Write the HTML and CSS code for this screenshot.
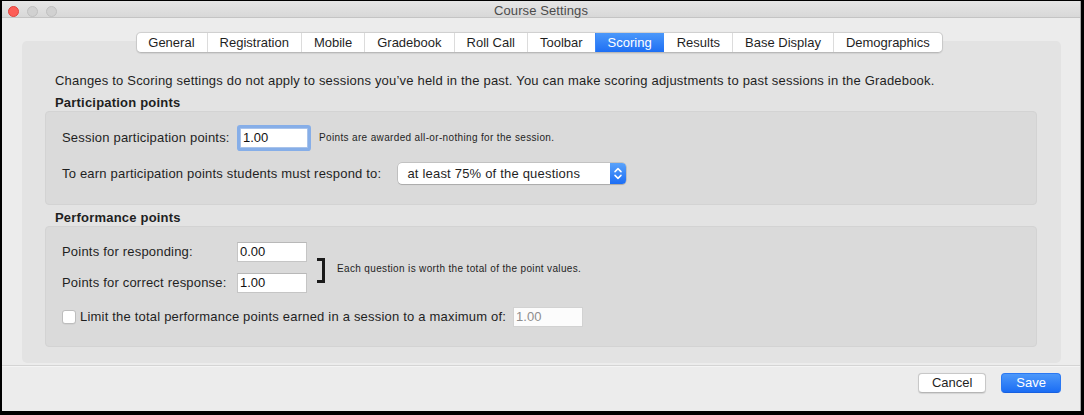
FILE: index.html
```html
<!DOCTYPE html>
<html lang="en">
<head>
<meta charset="utf-8">
<title>Course Settings</title>
<link rel="stylesheet" href="styles.css">
</head>
<body>
<div class="window">
  <div class="titlebar">
    <div class="lights">
      <span class="light red"></span>
      <span class="light"></span>
      <span class="light"></span>
    </div>
    <div class="title">Course Settings</div>
    <div></div>
  </div>

  <div class="content">
    <div class="tabs">
      <div class="seg">
        <span class="tab">General</span>
        <span class="tab">Registration</span>
        <span class="tab">Mobile</span>
        <span class="tab">Gradebook</span>
        <span class="tab">Roll Call</span>
        <span class="tab">Toolbar</span>
        <span class="tab active">Scoring</span>
        <span class="tab after-active">Results</span>
        <span class="tab">Base Display</span>
        <span class="tab">Demographics</span>
      </div>
    </div>

    <div class="panel">
      <p class="intro">Changes to Scoring settings do not apply to sessions you’ve held in the past. You can make scoring adjustments to past sessions in the Gradebook.</p>

      <h3 class="heading">Participation points</h3>
      <div class="group group-part">
        <div class="row row-session">
          <span class="lbl lbl-session">Session participation points:</span>
          <span class="field focused">1.00</span>
          <span class="small note-session">Points are awarded all-or-nothing for the session.</span>
        </div>
        <div class="row row-respond">
          <span class="lbl">To earn participation points students must respond to:</span>
          <div class="popup">
            <span class="popup-text">at least 75% of the questions</span>
            <span class="popup-arrow">
              <svg width="16" height="21" viewBox="0 0 16 21"><path d="M5 8.6 L8 5.6 L11 8.6" fill="none" stroke="#fff" stroke-width="1.5" stroke-linecap="round" stroke-linejoin="round"/><path d="M5 12.4 L8 15.4 L11 12.4" fill="none" stroke="#fff" stroke-width="1.5" stroke-linecap="round" stroke-linejoin="round"/></svg>
            </span>
          </div>
        </div>
      </div>

      <h3 class="heading heading-perf">Performance points</h3>
      <div class="group group-perf">
        <div class="pair">
          <div class="fields">
            <div class="row">
              <span class="lbl lbl-col">Points for responding:</span>
              <span class="field">0.00</span>
            </div>
            <div class="row">
              <span class="lbl lbl-col">Points for correct response:</span>
              <span class="field">1.00</span>
            </div>
          </div>
          <span class="bracket"></span>
          <span class="small note-pair">Each question is worth the total of the point values.</span>
        </div>
        <div class="row row-limit">
          <span class="checkbox"></span>
          <span class="lbl lbl-limit">Limit the total performance points earned in a session to a maximum of:</span>
          <span class="field disabled">1.00</span>
        </div>
      </div>
    </div>
  </div>

  <div class="footer">
    <button class="btn btn-cancel">Cancel</button>
    <button class="btn btn-save">Save</button>
  </div>
</div>
</body>
</html>
```

FILE: styles.css
```css
* { box-sizing: border-box; }

html, body {
  margin: 0;
  padding: 0;
  background: #000;
}

body {
  font-family: "Liberation Sans", Arial, sans-serif;
  font-size: 13px;
  color: #1f1f1f;
  padding: 1px 3px 0 2px;
}

.window {
  height: 410px;
  background: #ececec;
  display: flex;
  flex-direction: column;
  overflow: hidden;
  border-right: 1px solid #a8a8a8;
}

/* Title bar */
.titlebar {
  height: 17px;
  padding-top: 4px;
  background: linear-gradient(#e6e6e6, #d8d8d8);
  border-bottom: 1px solid #c4c4c4;
  display: grid;
  grid-template-columns: 1fr auto 1fr;
  align-items: center;
}

.lights {
  display: flex;
  gap: 8px;
  padding-left: 6px;
}

.light {
  width: 11px;
  height: 11px;
  border-radius: 50%;
  background: #d1d1d1;
  border: 1px solid #c0c0c0;
}

.light.red {
  background: #fd5e57;
  border-color: #e0443e;
}

.title {
  font-size: 13px;
  color: #4b4b4b;
  line-height: 12px;
  letter-spacing: 0.1px;
}

/* Content */
.content {
  flex: 1;
  padding: 14px 19px 0 20px;
}

.tabs {
  display: flex;
  justify-content: center;
  position: relative;
  z-index: 1;
  margin-bottom: -12px;
  padding-right: 4px;
}

.seg {
  display: flex;
  background: #fff;
  border: 1px solid #c9c9c9;
  border-top-color: #d0d0d0;
  border-bottom-color: #b9b9b9;
  border-radius: 5px;
  overflow: hidden;
  box-shadow: 0 0.5px 1px rgba(0, 0, 0, 0.08);
}

.tab {
  line-height: 19px;
  padding: 0 12px;
  border-left: 1px solid #dcdcdc;
  color: #1f1f1f;
}

.tab:first-child { border-left: none; padding-left: 11px; }

.tab.active {
  background: linear-gradient(#4b98fa, #1e6ff4);
  color: #fff;
  border-left-color: #3a86f7;
}

.tab.after-active { border-left-color: transparent; }

.panel {
  height: 322px;
  background: #e3e3e3;
  border-radius: 5px;
  padding: 32px 24px 0 23px;
  letter-spacing: 0.2px;
}

.intro {
  margin: 0;
  padding-left: 10px;
  line-height: 16px;
}

.heading {
  margin: 6px 0 0;
  padding-left: 10px;
  font-size: 13px;
  font-weight: bold;
  line-height: 16px;
}

.heading-perf { margin-top: 5px; }

.group {
  background: #dadada;
  border: 1px solid #d3d3d3;
  border-radius: 4px;
  padding-left: 16px;
  display: flex;
  flex-direction: column;
}

.group-part {
  padding-top: 16px;
  padding-bottom: 20px;
  gap: 15px;
}

.group-perf {
  padding-top: 15px;
  padding-bottom: 19px;
  gap: 14px;
}

.row {
  display: flex;
  align-items: center;
}

.lbl { line-height: 16px; white-space: nowrap; }

.lbl-session { width: 178px; }
.lbl-col { width: 175px; }

.field {
  display: block;
  width: 70px;
  height: 20px;
  line-height: 18px;
  background: #fff;
  border: 1px solid #c5c5c5;
  border-top-color: #b8b8b8;
  padding: 0 2px;
  color: #111;
  letter-spacing: 0;
}

.field.focused {
  width: 68px;
  border-color: #a9c3ea;
  box-shadow: 0 0 0 3px #86aee8;
  border-radius: 1px;
}

.field.disabled {
  color: #8e8e8e;
  border-color: #d2d2d2;
  background: #fcfcfc;
}

.small {
  font-size: 10px;
  letter-spacing: 0.35px;
  line-height: 12px;
  white-space: nowrap;
  color: #1f1f1f;
}

.note-session { margin-left: 11px; }

.row-respond .lbl { margin-right: 17px; }

.popup {
  display: flex;
  width: 228px;
  height: 21px;
  background: #fff;
  border-radius: 4px;
  box-shadow: 0 0 0 0.5px rgba(0, 0, 0, 0.22), 0 1px 1px rgba(0, 0, 0, 0.12);
  overflow: hidden;
}

.popup-text {
  flex: 1;
  padding-left: 9px;
  line-height: 21px;
}

.popup-arrow {
  width: 16px;
  height: 21px;
  background: linear-gradient(#5aa2fa, #1c6ef5);
  display: flex;
}

/* Performance */
.pair {
  display: flex;
  align-items: center;
}

.fields {
  display: flex;
  flex-direction: column;
  gap: 11px;
}

.bracket {
  width: 8px;
  height: 25px;
  margin: 5px 0 0 10px;
  border: 3px solid #1a1a1a;
  border-left: none;
}

.note-pair { margin: 2px 0 0 12px; }

.checkbox {
  width: 14px;
  height: 14px;
  background: #fff;
  border: 1px solid #bdbdbd;
  border-radius: 3px;
  box-shadow: 0 0.5px 0.5px rgba(0, 0, 0, 0.08);
  margin-right: 4px;
}

.lbl-limit { margin-right: 7px; }

/* Footer */
.footer {
  height: 46px;
  border-top: 1px solid #d4d4d4;
  box-shadow: inset 0 1px 0 #f4f4f4;
  background: #ececec;
  display: flex;
  justify-content: flex-end;
  align-items: flex-start;
  gap: 15px;
  padding: 7px 19px 0 0;
}

.btn {
  font-family: "Liberation Sans", Arial, sans-serif;
  font-size: 13px;
  height: 20px;
  line-height: 18px;
  border-radius: 4px;
  margin: 0;
}

.btn-cancel {
  padding: 0 13px;
  background: #fff;
  color: #1f1f1f;
  border: 1px solid #c8c8c8;
  border-bottom-color: #b5b5b5;
  box-shadow: 0 0.5px 1px rgba(0, 0, 0, 0.1);
}

.btn-save {
  padding: 0 14px;
  color: #fff;
  background: linear-gradient(#4c98fa, #1b6df4);
  border: 1px solid #2a78f3;
  border-bottom-color: #1760e0;
}
```
